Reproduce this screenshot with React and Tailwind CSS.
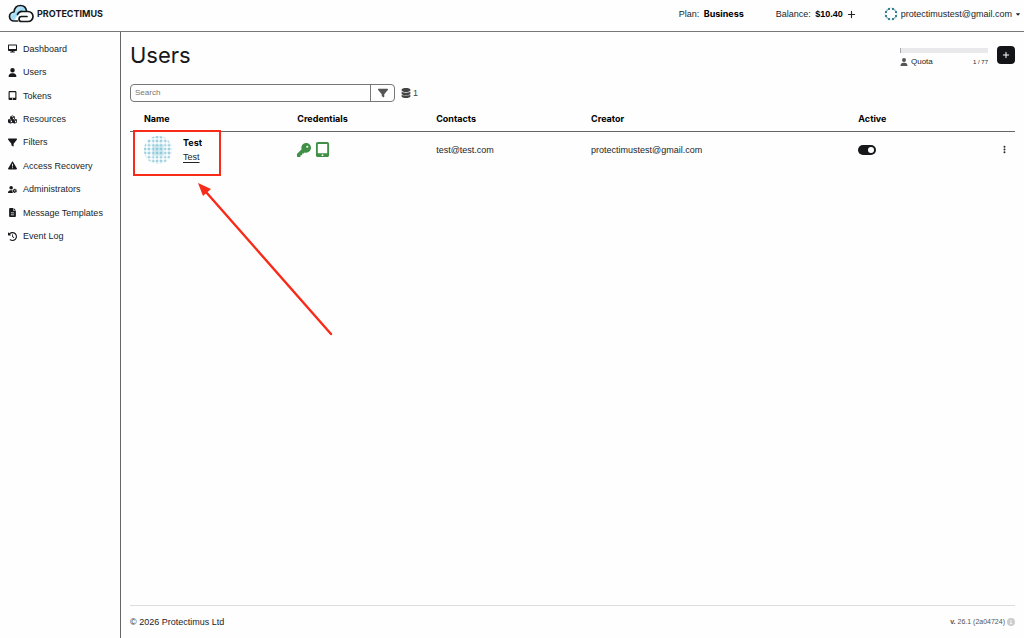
import React, { useState } from 'react';
import {
  FaDesktop, FaUser, FaTabletScreenButton, FaCubes, FaFilter, FaTriangleExclamation, FaUserGear,
  FaFileLines, FaClockRotateLeft, FaKey, FaDatabase, FaCircleInfo, FaPlus, FaEllipsisVertical, FaCaretDown,
} from 'react-icons/fa6';

const navItems = [
  { title: 'Dashboard', icon: FaDesktop },
  { title: 'Users', icon: FaUser },
  { title: 'Tokens', icon: FaTabletScreenButton },
  { title: 'Resources', icon: FaCubes },
  { title: 'Filters', icon: FaFilter },
  { title: 'Access Recovery', icon: FaTriangleExclamation },
  { title: 'Administrators', icon: FaUserGear },
  { title: 'Message Templates', icon: FaFileLines },
  { title: 'Event Log', icon: FaClockRotateLeft },
];

const users = [
  { id: 1, login: 'Test', name: 'Test', email: 'test@test.com', creator: 'protectimustest@gmail.com', active: true },
];

function Logo() {
  return (
    <a href="#" className="flex items-center gap-[3px] text-[#16181b]">
      <svg className="h-5 w-[26px]" viewBox="0 0 52 40" fill="none" strokeWidth="3.4" strokeLinecap="round" strokeLinejoin="round">
        <defs>
          <linearGradient id="cloud" x1="0" y1="0" x2="1" y2="1">
            <stop offset="0" stopColor="#f4fbff" />
            <stop offset="0.5" stopColor="#9bdcf5" />
            <stop offset="1" stopColor="#ffffff" />
          </linearGradient>
        </defs>
        <path d="M13 32a8 8 0 0 1-1-16C13 8 18 3 25 3c7 0 11 4 13 11l-11 2c-6 0-9 4-9 9z" fill="url(#cloud)" />
        <path d="M19 34h-7a9 9 0 0 1 0-18C13 7 18 3 25 3c7 0 11 4 12 11" stroke="currentColor" />
        <path d="M38 25H27a5 5 0 0 0 0 10h13a10 10 0 0 0 0-20H29a10 10 0 0 0-10 6" stroke="currentColor" />
      </svg>
      <span className="font-['Inter',sans-serif] text-[9px] font-bold leading-3">PROTECTIMUS</span>
    </a>
  );
}

function HeaderAvatar() {
  return (
    <svg className="size-[14px]" viewBox="0 0 28 28" fill="none">
      <circle cx="14" cy="14" r="12" stroke="#d9ebef" strokeWidth="3" />
      <path d="M8 4h4M16 4h4M8 24h4M16 24h4M4 8v4M4 16v4M24 8v4M24 16v4" stroke="#3b7f93" strokeWidth="4" />
      <path d="M5 5h3v3H5zM20 5h3v3h-3zM5 20h3v3H5zM20 20h3v3h-3z" fill="#8fbcc8" />
    </svg>
  );
}

function UserAvatar() {
  return (
    <svg className="size-7" viewBox="0 0 28 28">
      <defs>
        <clipPath id="round"><circle cx="14" cy="14" r="14" /></clipPath>
        <pattern id="dots" width="4" height="4" patternUnits="userSpaceOnUse">
          <path d="M0 1h4M1 0v4" stroke="#c3e3ec" strokeWidth="1" />
          <rect x="0" y="0" width="2" height="2" fill="#9dcfdf" />
        </pattern>
      </defs>
      <g clipPath="url(#round)">
        <rect width="28" height="28" fill="#f6fbfd" />
        <rect width="28" height="28" fill="url(#dots)" />
        <path d="M8 8h12v12H8z" fill="#7bbfd4" opacity="0.3" />
        <path d="M8 2v24M20 2v24M2 8h24M2 20h24" stroke="#ffffff" opacity="0.6" />
      </g>
    </svg>
  );
}

export default function App() {
  const [search, setSearch] = useState('');
  const [active, setActive] = useState(users[0].active);

  return (
    <div className="flex min-h-screen flex-col bg-[#fefefe] font-['Liberation_Sans',sans-serif] text-[9px] leading-3 text-[#212529]">
      <header className="flex h-8 items-center justify-between border-b border-[#777777] pb-[3px] pl-2 pr-[3px]">
        <Logo />
        <div className="flex items-center">
          <p className="mr-8">Plan: <b className="ml-[2px] font-['Inter',sans-serif] text-black">Business</b></p>
          <div className="mr-7 flex items-center gap-1">
            <span>Balance: <b className="ml-[2px] text-black">$10.40</b></span>
            <button type="button" aria-label="Add funds"><FaPlus className="size-[9px]" /></button>
          </div>
          <button type="button" className="flex items-center gap-[3px]">
            <HeaderAvatar />
            protectimustest@gmail.com
            <FaCaretDown className="size-[6px]" />
          </button>
        </div>
      </header>

      <div className="flex flex-1">
        <nav className="w-[121px] shrink-0 border-r border-[#666666] pt-[5px]">
          <ul className="grid h-[211px] grid-rows-9">
            {navItems.map(({ title, icon: Icon }) => (
              <li key={title} className="flex items-center">
                <a href="#" className="flex items-center gap-[5px] pl-[7px]">
                  <Icon className="size-[11px] p-px text-[#16181b]" />
                  {title}
                </a>
              </li>
            ))}
          </ul>
        </nav>

        <main className="relative flex min-w-0 flex-1 flex-col px-[9px]">
          <div className="flex items-start justify-between pt-[7px]">
            <h1 className="font-['Inter',sans-serif] text-[22px] leading-8 text-[#16181b]">Users</h1>
            <div className="flex items-start gap-[9px] pt-[7px]">
              <div className="w-[88px] pt-[2px]">
                <div className="h-[5px] border-l border-[#aaaaaa] bg-[#e9e9eb]"></div>
                <div className="mt-[3px] flex items-center justify-between text-[8px]">
                  <span className="flex items-center gap-[3px]"><FaUser className="size-2 text-[#555555]" />Quota</span>
                  <span className="text-[6px]">1 / 77</span>
                </div>
              </div>
              <button type="button" aria-label="Add user" className="flex size-[18px] items-center justify-center rounded bg-[#121417] text-white">
                <FaPlus className="size-2" />
              </button>
            </div>
          </div>

          <div className="mt-[13px] flex items-center gap-[6px]">
            <div className="flex h-[18px] w-[265px] overflow-hidden rounded border border-[#777777]">
              <input
                type="text"
                aria-label="Search"
                placeholder="Search"
                value={search}
                onChange={(e) => setSearch(e.target.value)}
                className="min-w-0 flex-1 px-1 text-[8px] outline-none placeholder:text-[#777777]"
              />
              <button type="button" aria-label="Filter" className="flex w-6 items-center justify-center border-l border-[#777777] text-[#555555]">
                <FaFilter className="size-[10px]" />
              </button>
            </div>
            <span className="flex items-center gap-[2px] text-[#444444]"><FaDatabase className="size-[10px]" />1</span>
          </div>

          <table className="mt-1 w-full table-fixed text-left">
            <thead>
              <tr className="h-[25px] border-b border-[#666666] font-['Inter',sans-serif] text-black">
                <th className="w-[18.9%] pl-[14px] pt-px">Name</th>
                <th className="w-[15.7%] pt-px">Credentials</th>
                <th className="w-[17.5%] pt-px">Contacts</th>
                <th className="w-[30.2%] pt-px">Creator</th>
                <th className="pt-px">Active</th>
                <th aria-label="Actions"></th>
              </tr>
            </thead>
            <tbody>
              {users.map((user) => (
                <tr key={user.id} className="h-[37px]">
                  <td className="relative pl-[14px]">
                    <div className="flex items-center gap-[11px]">
                      <UserAvatar />
                      <div className="leading-[14px]">
                        <b className="block font-['Inter',sans-serif] text-black">{user.login}</b>
                        <a href="#" className="block underline underline-offset-2">{user.name}</a>
                      </div>
                    </div>
                    {/* highlight frame */}
                    <div className="pointer-events-none absolute -top-[2px] left-[3px] h-[46px] w-[88px] border-2 border-[#f82a18]"></div>
                  </td>
                  <td>
                    <span className="flex items-center gap-1 text-[#3f8f45]">
                      <FaKey className="size-[14px]" />
                      <FaTabletScreenButton className="size-[15px]" />
                    </span>
                  </td>
                  <td>{user.email}</td>
                  <td>{user.creator}</td>
                  <td>
                    <label className="flex">
                      <input type="checkbox" aria-label="Active" checked={active} onChange={() => setActive(!active)} className="peer sr-only" />
                      <span className="flex h-[10px] w-[18px] items-center rounded-full bg-[#999999] p-[2px] peer-checked:justify-end peer-checked:bg-[#16181b]">
                        <span className="size-[6px] rounded-full bg-white"></span>
                      </span>
                    </label>
                  </td>
                  <td>
                    <button type="button" aria-label="More" className="ml-auto mr-[6px] flex"><FaEllipsisVertical className="size-[9px]" /></button>
                  </td>
                </tr>
              ))}
            </tbody>
          </table>

          {/* pointer arrow */}
          <svg className="pointer-events-none absolute left-[76px] top-[150px] h-[156px] w-[138px]" viewBox="0 0 138 156">
            <path d="M134 152L9 10" stroke="#f82a18" strokeWidth="2.4" strokeLinecap="round" />
            <path d="M1 1l13 6-8 7z" fill="#f82a18" />
          </svg>

          <footer className="mt-auto flex h-[33px] items-center justify-between border-t border-[#dddddd]">
            <span>© 2026 Protectimus Ltd</span>
            <span className="flex items-center gap-[2px] text-[7px] text-[#555555]">
              <span><b>v.</b> 26.1 (2a04724)</span>
              <FaCircleInfo className="size-2 text-[#cccccc]" />
            </span>
          </footer>
        </main>
      </div>
    </div>
  );
}
